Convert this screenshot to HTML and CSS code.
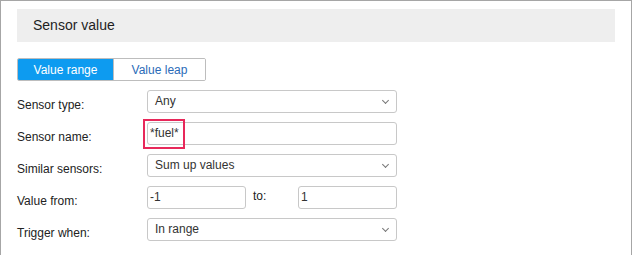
FILE: index.html
```html
<!DOCTYPE html>
<html lang="en">
<head>
    <meta charset="UTF-8">
    <title>Sensor value</title>
    <link rel="stylesheet" href="styles.css">
</head>
<body>
    <div class="panel">
        <div class="panel-title">Sensor value</div>

        <div class="tabs">
            <button class="tab active">Value range</button>
            <button class="tab">Value leap</button>
        </div>

        <div class="form">
            <div class="row">
                <label class="label">Sensor type:</label>
                <div class="select">Any<span class="chevron"></span></div>
            </div>
            <div class="row">
                <label class="label">Sensor name:</label>
                <div class="input mark-wrap">
                    <span class="value">*fuel*</span>
                    <span class="mark"></span>
                </div>
            </div>
            <div class="row">
                <label class="label">Similar sensors:</label>
                <div class="select">Sum up values<span class="chevron"></span></div>
            </div>
            <div class="row">
                <label class="label">Value from:</label>
                <div class="range">
                    <div class="input short"><span class="value">-1</span></div>
                    <span class="to">to:</span>
                    <div class="input short"><span class="value">1</span></div>
                </div>
            </div>
            <div class="row">
                <label class="label">Trigger when:</label>
                <div class="select">In range<span class="chevron"></span></div>
            </div>
        </div>
    </div>
</body>
</html>
```

FILE: styles.css
```css
body {
    margin: 0;
    font-family: 'Liberation Sans', Arial, sans-serif;
    font-size: 12px;
    color: #222;
    background: #fff;
}

.panel {
    height: 255px;
    box-sizing: border-box;
    border: 1px solid #a6a6a6;
    border-bottom: none;
    padding: 8px 16px 0 16px;
}

.panel-title {
    height: 33px;
    background: #eeeeee;
    font-size: 14px;
    line-height: 33px;
    padding-left: 16px;
    color: #1e1e1e;
}

.tabs {
    display: flex;
    margin-top: 16px;
    width: 189px;
    height: 23px;
    box-sizing: border-box;
    border: 1px solid #bdbdbd;
    border-radius: 2px;
    overflow: hidden;
}

.tab {
    font-family: inherit;
    font-size: 12px;
    border: none;
    background: #fff;
    color: #2a6bb8;
    padding: 0;
    height: 100%;
    cursor: pointer;
}

.tab:first-child {
    width: 95px;
}

.tab:last-child {
    flex: 1;
    border-left: 1px solid #bdbdbd;
}

.tab.active {
    background: #0d9bf0;
    color: #fff;
}

.form {
    margin-top: 9px;
    display: flex;
    flex-direction: column;
    gap: 9px;
}

.row {
    display: flex;
    align-items: flex-start;
    height: 23px;
}

.label {
    width: 130px;
    padding-top: 8px;
    line-height: 14px;
}

.select,
.input {
    position: relative;
    width: 250px;
    height: 23px;
    box-sizing: border-box;
    border: 1px solid #c8c8c8;
    border-radius: 3px;
    color: #333;
}

.select {
    padding-left: 7px;
    line-height: 21px;
}

.input {
    padding-left: 2px;
    line-height: 21px;
}

.chevron {
    position: absolute;
    right: 8px;
    top: 7px;
    width: 4px;
    height: 4px;
    border-right: 1px solid #777;
    border-bottom: 1px solid #777;
    transform: rotate(45deg);
}

.mark {
    position: absolute;
    left: -5px;
    top: -4px;
    width: 42px;
    height: 30px;
    box-sizing: border-box;
    border: 2px solid #e8285a;
}

.range {
    display: flex;
    align-items: flex-start;
}

.input.short {
    width: 99px;
}

.to {
    width: 52px;
    padding-left: 7px;
    box-sizing: border-box;
    line-height: 21px;
}
```
